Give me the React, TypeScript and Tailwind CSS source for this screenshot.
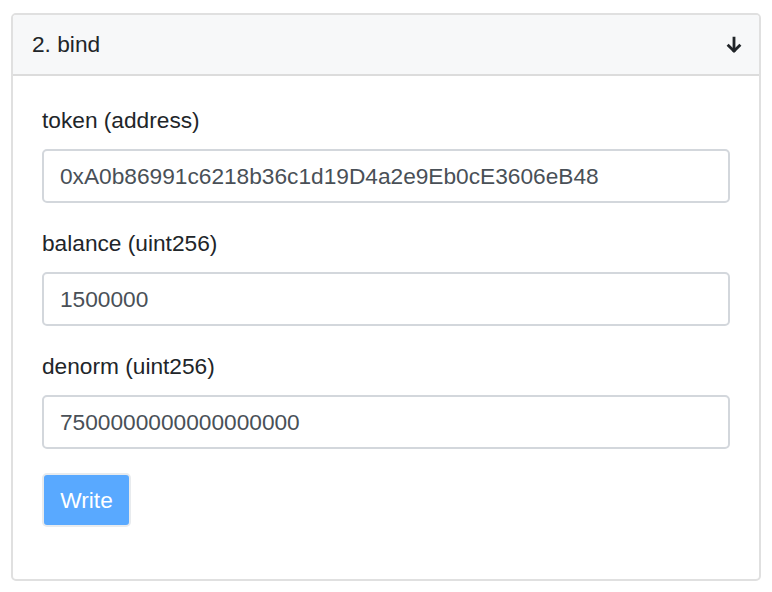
import React from "react";

const fields = [
  { label: "token (address)", value: "0xA0b86991c6218b36c1d19D4a2e9Eb0cE3606eB48" },
  { label: "balance (uint256)", value: "1500000" },
  { label: "denorm (uint256)", value: "7500000000000000000" },
];

export default function App() {
  return (
    <div
      className="w-[772px] h-[592px] bg-white pt-[13px] px-[11px]"
      style={{ fontFamily: '"Liberation Sans", Arial, sans-serif' }}
    >
      <div className="border-2 border-[#e0e0e0] rounded-[5px] overflow-hidden">
        <div className="h-[61px] bg-[#f7f8f9] border-b-2 border-[#dcdcdc] flex items-center justify-between pl-[19px] pr-[16px]">
          <span className="text-[22.7px] text-[#212529]">2. bind</span>
          <svg width="18" height="18" viewBox="0 0 16 16" fill="none" stroke="#212529" strokeWidth="2.5" strokeLinecap="square">
            <path d="M8 2V13" />
            <path d="M3.2 8.6L8 13.4L12.8 8.6" />
          </svg>
        </div>
        <div className="px-[29px] pt-[28px] pb-[28px]">
          {fields.map((f) => (
            <div key={f.label} className="mb-[24px]">
              <div className="text-[22.7px] leading-[33px] text-[#212529] mb-[12px]">{f.label}</div>
              <div className="h-[54px] border-2 border-[#d3d7dc] rounded-[5px] flex items-center px-[16px] text-[22.7px] text-[#495057]">
                {f.value}
              </div>
            </div>
          ))}
          <div className="mb-[24px]">
            <button className="h-[54px] w-[89px] rounded-[5px] bg-[#59a9ff] border-2 border-[#e8ebee] text-white text-[22.7px]">
              Write
            </button>
          </div>
        </div>
      </div>
    </div>
  );
}
